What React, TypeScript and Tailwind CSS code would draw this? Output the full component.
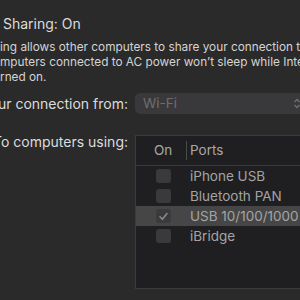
import React from "react";

const ports = [
  { name: "iPhone USB", on: false, sel: false },
  { name: "Bluetooth PAN", on: false, sel: false },
  { name: "USB 10/100/1000 LAN", on: true, sel: true },
  { name: "iBridge", on: false, sel: false },
];

function Check({ on }: { on: boolean }) {
  return (
    <div className="w-[15px] h-[14px] rounded-[3px] bg-[#3a3a3c] flex items-center justify-center">
      {on && (
        <svg width="11" height="11" viewBox="0 0 11 11">
          <path d="M2 5.8 L4.4 8.3 L9 2.6" fill="none" stroke="#8a8a8a" strokeWidth="1.6" strokeLinecap="round" strokeLinejoin="round" />
        </svg>
      )}
    </div>
  );
}

export default function App() {
  return (
    <div
      className="w-[300px] h-[300px] overflow-hidden bg-[#2a2a2b] text-[#dcdcdc] relative"
      style={{ fontFamily: "Inter, 'Liberation Sans', sans-serif" }}
    >
      <div className="pt-[14px] pl-[3px] text-[14px] leading-[20px] whitespace-nowrap">Sharing: On</div>
      <div className="mt-[6px] text-[11.8px] leading-[15px] text-[#d4d4d4] whitespace-nowrap">
        <div>ing allows other computers to share your connection to the Internet.</div>
        <div>mputers connected to AC power won’t sleep while Internet Sharing is</div>
        <div>rned on.</div>
      </div>
      <div className="mt-[8px] flex items-center h-[21px]">
        <div className="w-[128px] flex justify-end overflow-hidden shrink-0 text-[14px] whitespace-nowrap">
          <span className="shrink-0">Share your connection from:</span>
        </div>
        <div className="ml-[7px] w-[180px] shrink-0 h-[21px] rounded-[5px] bg-[#39393b] flex items-center pl-[8px] relative">
          <span className="text-[13.5px] text-[#6e6e6e]">Wi-Fi</span>
          <svg className="absolute left-[158px] top-[5px]" width="8" height="11" viewBox="0 0 8 11">
            <path d="M1.5 4 L4 1.5 L6.5 4 M1.5 7 L4 9.5 L6.5 7" fill="none" stroke="#707070" strokeWidth="1.3" />
          </svg>
        </div>
      </div>
      <div className="mt-[21px] flex items-start">
        <div className="w-[128px] flex justify-end overflow-hidden shrink-0 text-[14px] whitespace-nowrap -mt-[4px]">
          <span className="shrink-0">To computers using:</span>
        </div>
        <div className="ml-[7px] w-[200px] shrink-0 h-[154px] border border-[#3b3b3c] bg-[#1f1f21]">
          <div className="h-[30px] flex items-center border-b border-[#3b3b3c] text-[13.5px] text-[#a8a8a8]">
            <div className="w-[50px] pl-[18px]">On</div>
            <div className="w-px h-[19px] bg-[#4a4a4a]"></div>
            <div className="pl-[3px]">Ports</div>
          </div>
          {ports.map((p) => (
            <div
              key={p.name}
              className={`h-[20px] flex items-center whitespace-nowrap ${p.sel ? "bg-[#464646]" : ""}`}
            >
              <div className="w-[54px] pl-[20px]">
                <Check on={p.on} />
              </div>
              <span className="text-[13.5px] text-[#a4a4a4]">{p.name}</span>
            </div>
          ))}
        </div>
      </div>
    </div>
  );
}
